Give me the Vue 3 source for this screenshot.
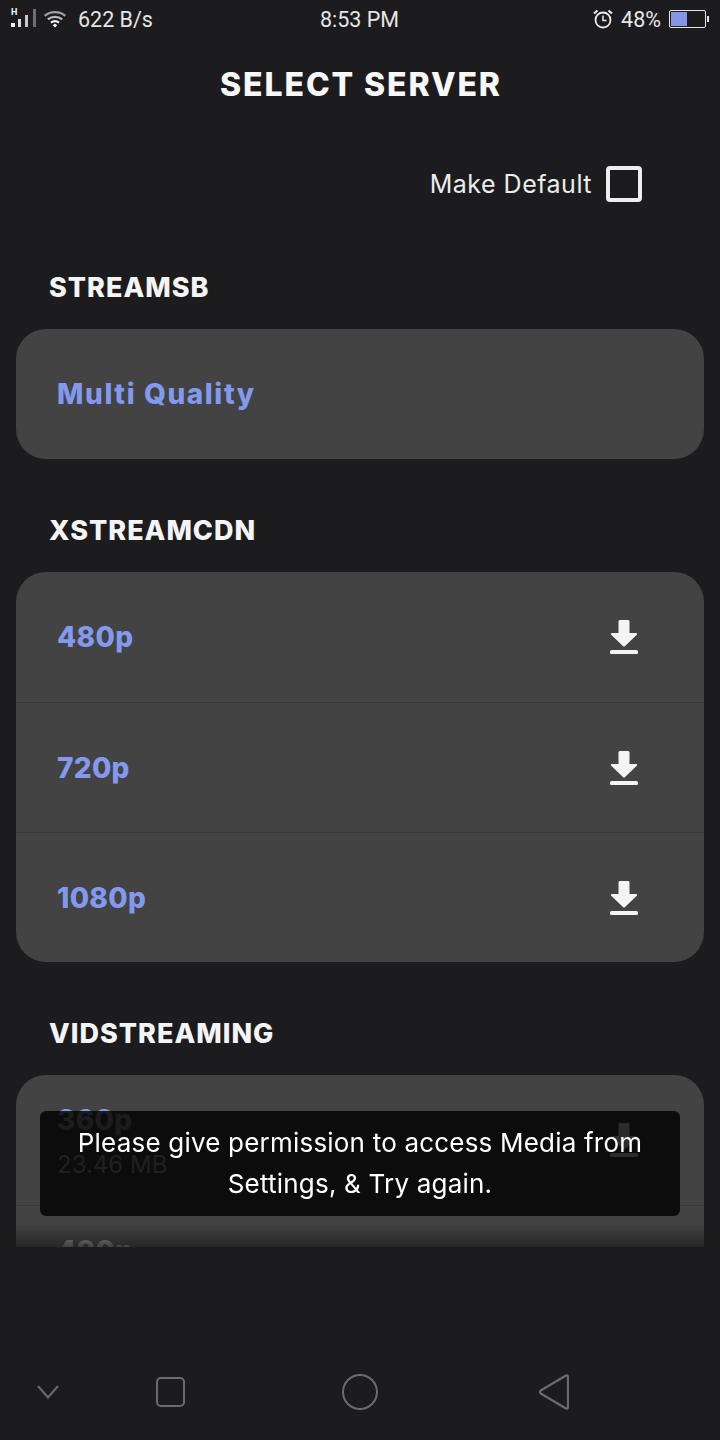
<template>
    <div class="screen">
        <div class="status_bar">
            <div class="status_left">
                <svg class="signal" width="30" height="22" viewBox="0 0 30 22">
                    <text x="1" y="7" class="signal_h">H</text>
                    <rect x="1" y="15" width="4" height="4" fill="#f2f2f2"/>
                    <rect x="8" y="11" width="3" height="8" fill="#dcdcdc"/>
                    <rect x="15" y="7" width="3" height="12" fill="#c8c8c8"/>
                    <rect x="23" y="1" width="3" height="18" fill="#6e6e6e"/>
                </svg>
                <svg class="wifi" width="24" height="18" viewBox="0 0 26 20" fill="none">
                    <path d="M1.500 6.500C8 1 18 1 24.500 6.500" stroke="#a0a0a0" stroke-width="2.400"/>
                    <path d="M5 10.500C9.500 6.800 16.500 6.800 21 10.500" stroke="#bcbcbc" stroke-width="2.400"/>
                    <path d="M8.500 14C11.200 12 14.800 12 17.500 14" stroke="#f4f4f4" stroke-width="2.400"/>
                    <path d="M10.500 17L13 15L15.500 17L13 19.500Z" fill="#f4f4f4"/>
                </svg>
                <span class="net_speed">622 B/s</span>
            </div>
            <span class="clock">8:53 PM</span>
            <div class="status_right">
                <svg class="alarm" width="20" height="20" viewBox="0 0 20 20" fill="none" stroke="#ececec">
                    <circle cx="10" cy="11" r="7.500" stroke-width="1.800"/>
                    <path d="M10 6.500V11.500H13.500" stroke-width="1.500"/>
                    <path d="M1 4.500L4.500 1.500M19 4.500L15.500 1.500" stroke-width="2.200"/>
                </svg>
                <span class="battery_text">48%</span>
                <div class="battery">
                    <div class="battery_body">
                        <div class="battery_level"></div>
                    </div>
                    <div class="battery_tip"></div>
                </div>
            </div>
        </div>

        <div class="page_title">SELECT SERVER</div>

        <div class="default_row">
            <span class="default_label">Make Default</span>
            <div class="checkbox"></div>
        </div>

        <div class="server_list">
            <div class="server_group" v-for="group in groups" :key="group.name">
                <div class="group_name">{{group.name}}</div>
                <div class="group_card">
                    <div class="server_row" v-for="item in group.items" :key="item.label">
                        <div :class="['server_info', {server_info_tall: item.tall}]">
                            <div :class="['server_label', {server_label_wide: item.wide}]">{{item.label}}</div>
                            <div class="server_size" v-if="item.size">{{item.size}}</div>
                        </div>
                        <svg v-if="item.download" class="download" width="28" height="34" viewBox="0 0 28 34">
                            <path d="M8.500 1.500C8.500 .7 9.200 0 10 0H18C18.800 0 19.500 .7 19.500 1.500V13H26C27 13 27.500 14 26.800 14.800L14.800 26.200C14.300 26.600 13.700 26.600 13.200 26.200L1.200 14.800C.5 14 1 13 2 13H8.500Z" fill="#f4f4f4"/>
                            <rect x="0" y="30" width="28" height="4" rx="1.500" fill="#f4f4f4"/>
                        </svg>
                    </div>
                </div>
            </div>
            <div class="list_fade"></div>
        </div>

        <div class="toast">Please give permission to access Media from Settings, &amp; Try again.</div>

        <div class="nav_bar">
            <svg class="nav_back" width="22" height="14" viewBox="0 0 22 14" fill="none" stroke="#6b6b6b" stroke-width="2">
                <path d="M1 1L11 12.500L21 1"/>
            </svg>
            <svg class="nav_recent" width="29" height="30" viewBox="0 0 29 30" fill="none" stroke="#6b6b6b" stroke-width="2">
                <rect x="1" y="1" width="27" height="28" rx="4"/>
            </svg>
            <svg class="nav_home" width="36" height="36" viewBox="0 0 36 36" fill="none" stroke="#6b6b6b" stroke-width="2">
                <circle cx="18" cy="18" r="17"/>
            </svg>
            <svg class="nav_return" width="30" height="36" viewBox="0 0 30 36" fill="none" stroke="#6b6b6b" stroke-width="2.200" stroke-linejoin="round">
                <path d="M27 1.500C28.300 1 29 1.700 29 3V33C29 34.300 28.300 35 27 34.500L1.800 19.500C.7 18.700 .7 17.300 1.800 16.500Z"/>
            </svg>
        </div>
    </div>
</template>

<script setup>
const groups = [
    {
        name: "STREAMSB",
        items: [
            {label: "Multi Quality", download: false, wide: true}
        ]
    },
    {
        name: "XSTREAMCDN",
        items: [
            {label: "480p", download: true},
            {label: "720p", download: true},
            {label: "1080p", download: true}
        ]
    },
    {
        name: "VIDSTREAMING",
        items: [
            {label: "360p", size: "23.46 MB", download: true, tall: true},
            {label: "480p", download: true, tall: true}
        ]
    }
];
</script>

<style>
body{
    background: #1c1c1e;
}
</style>

<style scoped>
.screen{
    position: relative;
    display: flex;
    flex-direction: column;
    width: 720px;
    height: 1440px;
    overflow: hidden;
    background: #1c1c1e;
    color: #f4f4f4;
    font-family: "Inter", "Liberation Sans", sans-serif;
}

.status_bar{
    display: grid;
    grid-template-columns: 1fr auto 1fr;
    align-items: center;
    height: 38px;
    padding: 0 11px 0 10px;
    font-family: "Roboto", sans-serif;
    font-size: 21.500px;
    color: #e6e6e6;
}

.status_left{
    display: flex;
    align-items: center;
}

.signal_h{
    font-size: 9px;
    font-weight: bold;
    fill: #f0f0f0;
    font-family: "Roboto", sans-serif;
}

.wifi{
    margin-left: 3px;
}

.net_speed{
    margin-left: 11px;
}

.status_right{
    display: flex;
    align-items: center;
    justify-content: flex-end;
}

.battery_text{
    margin-left: 8px;
}

.battery{
    display: flex;
    align-items: center;
    margin-left: 8px;
}

.battery_body{
    width: 37px;
    height: 18px;
    padding: 1px;
    box-sizing: border-box;
    border: solid 1px #e6e6e6;
    border-radius: 2px;
}

.battery_level{
    width: 48%;
    height: 100%;
    background: #8496e6;
}

.battery_tip{
    width: 2px;
    height: 6px;
    margin-left: 1px;
    background: #e6e6e6;
}

.page_title{
    margin-top: 24px;
    padding-left: 2px;
    font-size: 32px;
    line-height: 46px;
    font-weight: 800;
    letter-spacing: 1.900px;
    text-align: center;
    color: #f7f7f7;
}

.default_row{
    display: flex;
    align-items: center;
    justify-content: flex-end;
    gap: 14px;
    margin-top: 58px;
    padding-right: 78px;
}

.default_label{
    font-size: 25px;
    letter-spacing: .5px;
    color: #ececec;
}

.checkbox{
    width: 36px;
    height: 36px;
    box-sizing: border-box;
    border: solid 4px #eeeeee;
    border-radius: 4px;
}

.server_list{
    position: relative;
    height: 1031px;
    margin-top: 14px;
    overflow: hidden;
    padding: 0 16px;
}

.server_group{
    margin-top: 53px;
}

.group_name{
    padding-left: 33px;
    margin-bottom: 22px;
    font-size: 27px;
    line-height: 38px;
    font-weight: 800;
    letter-spacing: 1px;
    color: #f4f4f4;
}

.group_card{
    border-radius: 30px;
    background: #434343;
    overflow: hidden;
}

.server_row{
    display: flex;
    align-items: center;
    justify-content: space-between;
    height: 130px;
    box-sizing: border-box;
    padding: 0 66px 0 41px;
    border-top: solid 1px #383838;
}

.server_row:first-child{
    border-top: none;
}

.server_info_tall{
    height: 130px;
    padding-top: 25px;
    box-sizing: border-box;
}

.server_label{
    font-size: 28px;
    line-height: 40px;
    font-weight: 800;
    letter-spacing: .3px;
    color: #8299ed;
}

.server_label_wide{
    letter-spacing: 1.600px;
}

.server_size{
    margin-top: 8px;
    font-size: 24px;
    line-height: 34px;
    color: #b0b0b0;
}

.list_fade{
    position: absolute;
    left: 0;
    right: 0;
    bottom: 0;
    height: 22px;
    background: linear-gradient(to bottom, rgba(28,28,30,.05), rgba(28,28,30,.7));
    backdrop-filter: grayscale(1);
}

.toast{
    position: absolute;
    left: 40px;
    top: 1111px;
    width: 640px;
    height: 105px;
    box-sizing: border-box;
    padding: 11px 30px;
    border-radius: 6px;
    background: rgba(0,0,0,.82);
    backdrop-filter: grayscale(1);
    font-size: 26px;
    letter-spacing: .2px;
    line-height: 41px;
    text-align: center;
    color: #ffffff;
}

.nav_bar{
    display: flex;
    align-items: center;
    height: 70px;
    margin-top: auto;
    margin-bottom: 13px;
    padding-left: 37px;
}

.nav_recent{
    margin-left: 97px;
}

.nav_home{
    margin-left: 157px;
}

.nav_return{
    margin-left: 161px;
}
</style>
